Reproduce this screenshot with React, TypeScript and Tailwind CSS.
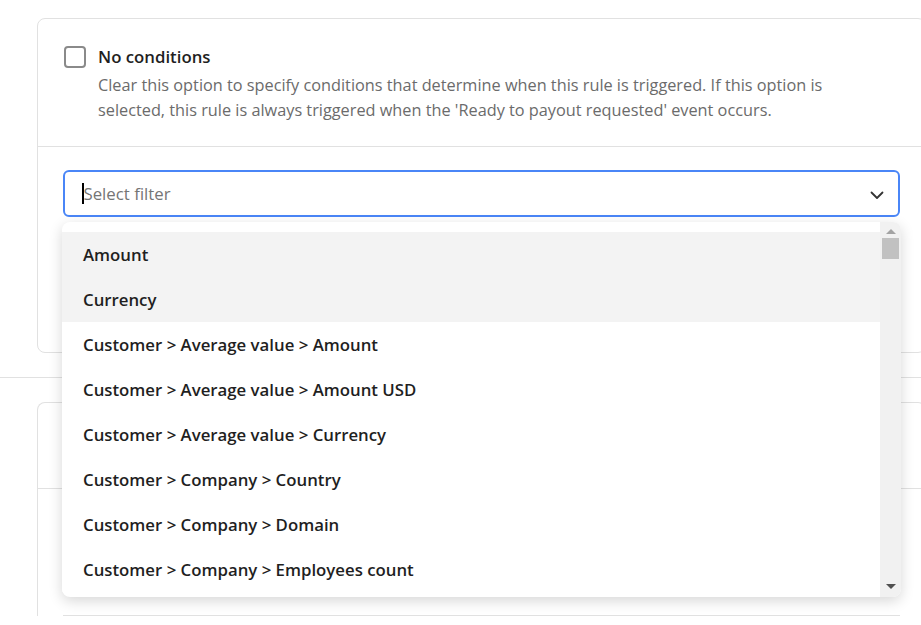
import React from "react";

const options = [
  "Amount",
  "Currency",
  "Customer > Average value > Amount",
  "Customer > Average value > Amount USD",
  "Customer > Average value > Currency",
  "Customer > Company > Country",
  "Customer > Company > Domain",
  "Customer > Company > Employees count",
];

// first two are hovered / highlighted in the list
const highlighted = ["Amount", "Currency"];

const App: React.FC = () => {
  return (
    <div
      className="relative h-[625px] w-[921px] overflow-hidden bg-white text-[#1f1f1f]"
      style={{ fontFamily: '"Open Sans", "Noto Sans", sans-serif' }}
    >
      <div className="pt-[18px]">
        {/* Conditions card */}
        <div className="ml-[37px] w-[889px] rounded-lg border border-[#e1e1e1]">
          <div className="flex gap-3 border-b border-[#e1e1e1] px-[26px] pt-[26px] pb-[23px]">
            <div className="mt-[1px] h-[22px] w-[22px] shrink-0 rounded-[4px] border-2 border-[#8a8a8a] bg-white" />
            <div>
              <p className="text-[16.8px] font-semibold leading-[24px]">No conditions</p>
              <p className="mt-[4px] text-[16.3px] leading-[25px] text-[#6b6b6b]">
                Clear this option to specify conditions that determine when this rule is triggered. If this option is
                <br />
                selected, this rule is always triggered when the 'Ready to payout requested' event occurs.
              </p>
            </div>
          </div>

          <div className="px-[25px] pt-[23px] pb-[135px]">
            <div className="flex h-[47px] items-center rounded-md border-2 border-[#4a86f7] pl-[17px] pr-[13px]">
              <span className="h-[21px] w-[1.5px] bg-black" />
              <span className="flex-1 text-[16.8px] text-[#757575]">Select filter</span>
              <svg width="16" height="16" viewBox="0 0 16 16" fill="none" className="mt-[2px]">
                <path d="M2.5 5.5 L8 11 L13.5 5.5" stroke="#333" strokeWidth="1.8" strokeLinecap="round" strokeLinejoin="round" />
              </svg>
            </div>
          </div>
        </div>

        <div className="mt-[24px] border-t border-[#e1e1e1]" />

        {/* Next card, mostly hidden under the menu */}
        <div className="mt-[24px] ml-[37px] w-[889px] rounded-t-lg border border-b-0 border-[#e1e1e1]">
          <div className="h-[86px] border-b border-[#e1e1e1]" />
          <div className="px-[25px]">
            <div className="h-[127px] border-b border-[#e1e1e1]" />
          </div>
        </div>
      </div>

      {/* Filter options menu */}
      <div className="absolute top-[222px] left-[62px] flex h-[375px] w-[839px] overflow-hidden rounded-lg bg-white shadow-[0_4px_14px_rgba(0,0,0,0.16)]">
        <div className="flex-1 pt-[10px]">
          {options.map((opt) => (
            <div
              key={opt}
              className={
                "flex h-[45px] items-center px-[21px] text-[16.8px] font-semibold " +
                (highlighted.includes(opt) ? "bg-[#f3f3f3]" : "bg-white")
              }
            >
              {opt}
            </div>
          ))}
        </div>
        <div className="flex w-[21px] flex-col items-center bg-[#f1f1f1]">
          <div className="mt-[7px] h-0 w-0 border-x-[5px] border-b-[5px] border-x-transparent border-b-[#a3a3a3]" />
          <div className="mt-[4px] h-[21px] w-[17px] bg-[#c1c1c1]" />
          <div className="flex-1" />
          <div className="mb-[8px] h-0 w-0 border-x-[5px] border-t-[5px] border-x-transparent border-t-[#505050]" />
        </div>
      </div>
    </div>
  );
};

export default App;
